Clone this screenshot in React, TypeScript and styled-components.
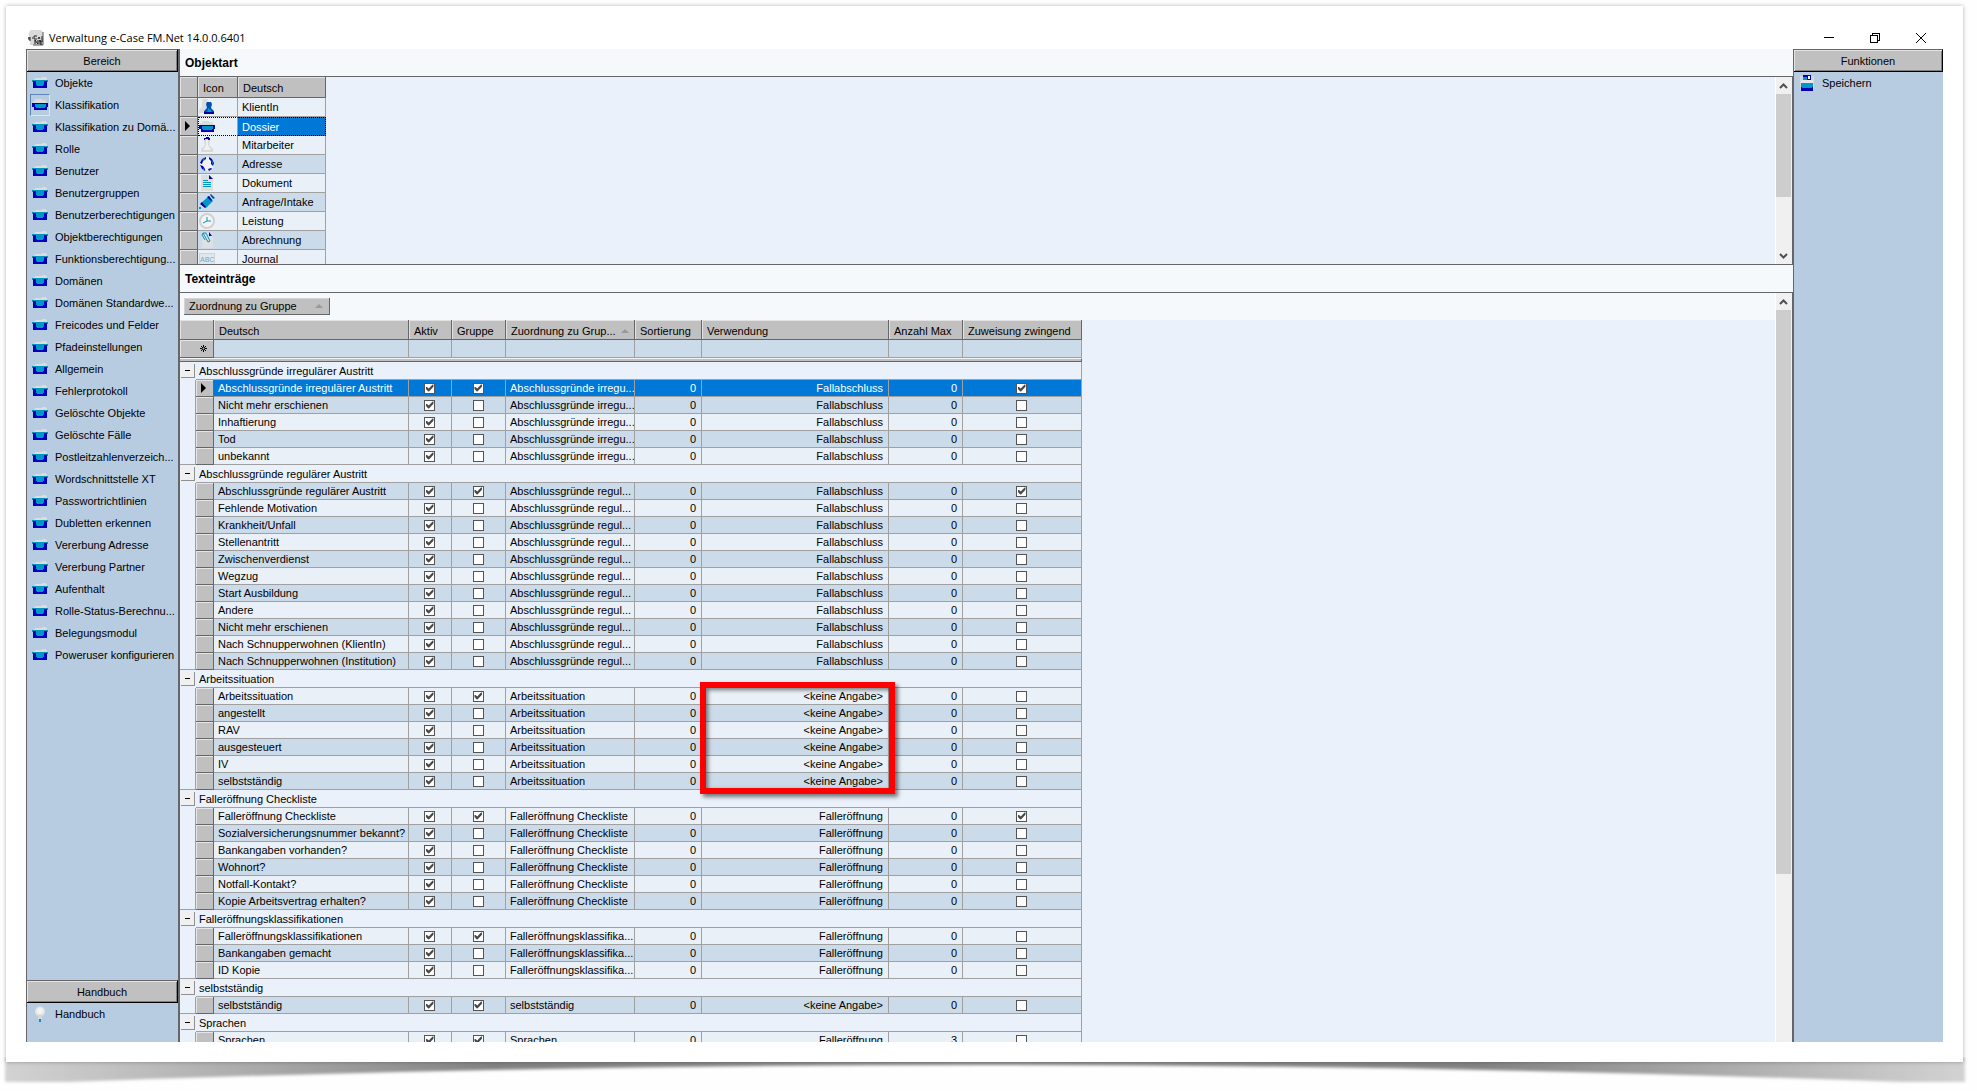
import React from 'react';
import styled, { createGlobalStyle, css } from 'styled-components';

const GlobalStyle = createGlobalStyle`
  *, *::before, *::after { box-sizing: border-box; }
  body { margin: 0; background: #fefefe; }
  button { font: inherit; color: inherit; margin: 0; padding: 0; border: 0; background: none; text-align: left; white-space: nowrap; }
  svg { display: block; flex: none; }
`;

const LINE = '#a0a0a0';
const DARK = '#646668';
const FACE = '#c0c0c0';
const PANEL = '#b8cce1';
const GRID = '#eaf1fa';
const STRIP = '#f5f9fc';
const ALT = '#ccdbea';
const SELECT = '#0078d7';

const Page = styled.div`
  position: relative;
  display: flex;
  height: 100vh;
  padding: 6px 14px 29px 6px;
  overflow: hidden;
  font: 11px/16px 'Liberation Sans', Arial, sans-serif;
  color: #000;
`;

const LiftShadow = styled.svg`
  position: absolute;
  left: 0;
  bottom: 0;
  width: 100%;
  height: 34px;
`;

const Card = styled.div`
  position: relative;
  flex: 1;
  min-width: 0;
  display: flex;
  flex-direction: column;
  padding: 20px;
  background: #fff;
  box-shadow: 0 0 4px rgba(0, 0, 0, 0.3);
`;

const TitleBar = styled.header`
  flex: none;
  display: flex;
  align-items: center;
  height: 23px;
  padding: 0 15px 0 2px;
  font: 11px/16px 'Open Sans', 'Noto Sans', sans-serif;
`;

const AppTitle = styled.h1`
  flex: 1;
  margin: 0 0 0 5px;
  font: inherit;
`;

const WindowButtons = styled.div`
  display: flex;
  gap: 32px;
`;

const WindowButton = styled.button`
  display: grid;
  place-items: center;
  width: 14px;
  height: 14px;
`;

const Body = styled.div`
  flex: 1;
  min-height: 0;
  display: flex;
  overflow: hidden;
`;

const Sidebar = styled.nav<{ $width: number }>`
  flex: none;
  display: flex;
  flex-direction: column;
  width: ${(p) => p.$width}px;
  background: ${PANEL};
  border-left: 1px solid ${DARK};
`;

const PanelHeader = styled.button`
  flex: none;
  height: 23px;
  text-align: center;
  background: ${FACE};
  border-top: 1px solid ${DARK};
  border-right: 1px solid #000;
  border-bottom: 1px solid #000;
  box-shadow: inset 1px 1px #e4e4e4, inset -1px -1px #808080;
`;

const ItemList = styled.ul<{ $grow?: boolean; $min?: number }>`
  flex: ${(p) => (p.$grow ? '1' : 'none')};
  min-height: ${(p) => p.$min ?? 0}px;
  margin: 0;
  padding: 0;
  list-style: none;
  overflow: hidden;
`;

const ItemButton = styled.button`
  display: flex;
  align-items: center;
  gap: 5px;
  width: 100%;
  height: 22px;
  padding-left: 3px;
`;

const IconSlot = styled.span<{ $pressed?: boolean }>`
  flex: none;
  display: grid;
  place-items: center;
  width: 20px;
  height: 22px;
  border: 1px solid transparent;
  ${(p) => p.$pressed && css`border-color: #5b87b8 #dbe6f2 #dbe6f2 #5b87b8;`}
`;

const Main = styled.main`
  flex: 1;
  min-width: 0;
  display: flex;
  flex-direction: column;
  border-left: 2px solid ${DARK};
`;

const SectionTitle = styled.h2`
  flex: none;
  height: 28px;
  margin: 0;
  padding: 0 5px;
  font: bold 12px/28px 'Liberation Sans', Arial, sans-serif;
  background: ${STRIP};
  border-bottom: 1px solid ${DARK};
`;

const Pane = styled.section<{ $fixed?: boolean }>`
  display: flex;
  flex: ${(p) => (p.$fixed ? 'none' : '1')};
  height: ${(p) => (p.$fixed ? '188px' : 'auto')};
  min-height: 0;
  overflow: hidden;
  background: ${GRID};
  border-right: 1px solid ${DARK};
  border-bottom: ${(p) => (p.$fixed ? `1px solid ${DARK}` : '0')};
`;

const PaneContent = styled.div`
  flex: 1;
  min-width: 0;
  overflow: hidden;
`;

const ScrollTrack = styled.div`
  flex: none;
  display: flex;
  flex-direction: column;
  width: 17px;
  background: #f0f0f0;
  border-left: 1px solid #fff;
`;

const ScrollArea = styled.div`
  flex: 1;
  min-height: 0;
`;

const ScrollThumb = styled.div<{ $size: number }>`
  height: ${(p) => p.$size}%;
  width: 15px;
  background: #cdcdcd;
`;

const ScrollButton = styled.button`
  display: grid;
  place-items: center;
  width: 15px;
  height: 17px;
`;

const Table = styled.table<{ $width: number }>`
  width: ${(p) => p.$width}px;
  table-layout: fixed;
  border-collapse: separate;
  border-spacing: 0;
  white-space: nowrap;
`;

const Th = styled.th`
  height: 20px;
  padding: 2px 5px 0;
  font-weight: normal;
  text-align: left;
  overflow: hidden;
  background: ${FACE};
  border-right: 1px solid ${DARK};
  border-bottom: 1px solid ${DARK};
  box-shadow: inset 1px 1px #e2e2e2;
`;

const ObjectTh = styled(Th)`
  height: 21px;
`;

const HeadLabel = styled.span`
  display: flex;
  align-items: center;
  justify-content: space-between;
`;

const Selector = styled.td`
  padding: 0 0 0 4px;
  background: ${FACE};
  border-right: 1px solid ${DARK};
  border-bottom: 1px solid ${DARK};
  box-shadow: inset 1px 1px #e6e6e6;
`;

type CellProps = { $alt?: boolean; $selected?: boolean; $align?: string };

const Td = styled.td<CellProps>`
  height: 17px;
  padding: 0 5px 0 4px;
  overflow: hidden;
  text-align: ${(p) => p.$align ?? 'left'};
  color: ${(p) => (p.$selected ? '#fff' : '#000')};
  background: ${(p) => (p.$selected ? SELECT : p.$alt ? ALT : '#e9f0f8')};
  border-right: 1px solid ${LINE};
  border-bottom: 1px solid ${LINE};
`;

const GroupNameTd = styled(Td)`
  padding: 0 0 0 4px;
`;

const ObjectTd = styled(Td)<{ $focusStart?: boolean; $focusEnd?: boolean }>`
  height: 19px;
  ${(p) => (p.$focusStart || p.$focusEnd) && css`
    border-top: 1px dotted #000;
    border-bottom: 1px dotted #000;
  `}
  ${(p) => p.$focusStart && css`border-left: 1px dotted #000;`}
  ${(p) => p.$focusEnd && css`border-right: 1px dotted #000;`}
`;

const ObjectIconTd = styled(ObjectTd)<{ $flush?: boolean }>`
  padding: 0 0 0 ${(p) => (p.$flush ? 0 : 1)}px;
`;

const NewRowTd = styled(Td)`
  height: 18px;
`;

const NewRowSelector = styled(Selector)`
  padding: 0 6px 0 0;
`;

const NewMark = styled.svg`
  margin-left: auto;
`;

const SplitTd = styled.td`
  height: 4px;
  padding: 0;
  line-height: 0;
  background: ${FACE};
  border-top: 1px solid #f4f4f4;
  border-bottom: 1px solid ${DARK};
  border-right: 1px solid ${DARK};
`;

const IndentTd = styled.td<{ $last?: boolean }>`
  padding: 0;
  border-right: 1px solid ${LINE};
  border-bottom: ${(p) => (p.$last ? `1px solid ${LINE}` : '0')};
`;

const ToggleTd = styled.td`
  height: 18px;
  padding: 0 0 0 1px;
`;

const Toggle = styled.button`
  display: grid;
  place-items: center;
  width: 14px;
  height: 14px;
  background: #f0f0f0;
  border-right: 1px solid #909090;
  border-bottom: 1px solid #909090;
`;

const GroupTd = styled.td`
  padding: 1px 3px 0;
  line-height: 16px;
  border-right: 1px solid ${LINE};
  border-bottom: 1px solid ${LINE};
`;

const Check = styled.input`
  appearance: none;
  display: block;
  width: 11px;
  height: 11px;
  margin: 0 auto;
  background: #fff;
  border: 1px solid #555;

  &:checked::after {
    content: '';
    display: block;
    width: 9px;
    height: 9px;
    background: #484848;
    clip-path: polygon(11% 38%, 22% 38%, 42% 56%, 84% 11%, 94% 11%, 94% 36%, 44% 89%, 36% 89%, 11% 62%);
  }
`;

const GroupByArea = styled.div`
  height: 27px;
  padding: 5px 4px;
  background: ${STRIP};
`;

const GroupByButton = styled.button`
  display: flex;
  align-items: center;
  justify-content: space-between;
  width: 146px;
  height: 17px;
  padding: 0 6px 0 5px;
  background: ${FACE};
  border-right: 1px solid ${DARK};
  border-bottom: 1px solid ${DARK};
  box-shadow: inset 1px 1px #d4d4d4;
`;

const GridBody = styled.div`
  position: relative;
`;

const Highlight = styled.div`
  position: absolute;
  left: 520px;
  top: 362px;
  width: 195px;
  height: 112px;
  border: 6px solid #fe0000;
  box-shadow: 3px 3px 4px rgba(0, 0, 0, 0.5), inset 2px 2px 4px rgba(0, 0, 0, 0.5);
`;

const FolderIcon = ({ open }: { open?: boolean }) => (
  <svg width="16" height="12" viewBox="0 0 16 12" shapeRendering="crispEdges" aria-hidden="true">
    {open ? (
      <>
        <path d="M3 0h7v1h4v2h1v2H1V2h2z" fill="#dcdcdc" />
        <path d="M0 4h16v4h-1v3H2V8H0z" fill="#0000b4" />
        <path d="M3 5h11v3h-1v1H4V8H3z" fill="#0096c8" />
      </>
    ) : (
      <>
        <path d="M3 1h7V0h4v1h1v2H2V2h1z" fill="#dcdcdc" />
        <path d="M0 3h16v2H0z" fill="#0096c8" />
        <path d="M1 4h14v7H1z" fill="#0000c0" />
        <path d="M4 3h8v5h-1v1H5V8H4z" fill="#0096c8" />
      </>
    )}
  </svg>
);

const SaveIcon = () => (
  <svg width="16" height="16" viewBox="0 0 16 16" shapeRendering="crispEdges" aria-hidden="true">
    <path d="M1 1h14v14H1z" fill="#d2d8de" />
    <path d="M4 0h8v5H4z" fill="#0000c0" />
    <path d="M4 2h4v3H4z" fill="#0096c8" />
    <path d="M9 1h2v3H9z" fill="#fff" />
    <path d="M2 5h12v3H2z" fill="#e6e6e6" />
    <path d="M2 8h12v8H2z" fill="#0096c8" />
    <path d="M2 12h1v1h10v-1h1v4H2z" fill="#0000b4" />
  </svg>
);

const BulbIcon = () => (
  <svg width="16" height="16" viewBox="0 0 16 16" aria-hidden="true">
    <circle cx="8" cy="5.500" r="5" fill="#e4e4e4" />
    <circle cx="8" cy="5" r="3" fill="#f4f4f4" />
    <path d="M6 9h4v4H6z" fill="#d8d8d8" />
    <path d="M7 13h2v3H7z" fill="#0096c8" />
  </svg>
);

const LogoIcon = () => (
  <svg width="16" height="16" viewBox="0 0 16 16" aria-hidden="true">
    <path d="M1 6a7 6 0 0 1 14-3v12H2z" fill="#d9d9d9" />
    <path d="M15 2v13H5" stroke="#555" fill="none" />
    <path d="M0 8h3M1 7v3h2M4 8h1M6 6v3h3M6 6h3M10 9l1-2 1 2M13 7h2M13 9h2" stroke="#222" fill="none" />
    <path d="M7 14v-4l3 4v-4M12 10v4h2M11 11h4M12 12h2" stroke="#111" fill="none" />
  </svg>
);

const objectIcons: Record<string, React.ReactNode> = {
  KlientIn: (
    <>
      <path d="M4 0h4l1 3-1 4 3 3v4H0v-3l3-3V3z" fill="#dcdcdc" />
      <path d="M8 3h4l1 2-1 4 3 3v3H5v-3l3-3-1-4z" fill="#0050b4" />
      <path d="M9 9l3 2 1 4H8z" fill="#0096c8" />
      <path d="M5 13h10v2H5z" fill="#0000a0" />
    </>
  ),
  Mitarbeiter: (
    <>
      <path d="M6 1h4l1 3-1 4 4 4v3H2v-3l4-4-1-4z" fill="#d8d8d8" />
      <path d="M7 3h2v5l3 5H4l3-5z" fill="#f0f0f0" />
      <path d="M5 3V1h2V0h3v1h1v2H9V2H6v1z" fill="#0000a0" />
    </>
  ),
  Adresse: (
    <>
      <circle cx="8" cy="8" r="7" fill="#f2f2f2" />
      <path d="M3 3l4-2v2L4 5 3 8 1 7zM10 1l3 2 2 4-1 3-2-2V5l-2-2zM1 9l3 1 2 3v2l-3-2zM9 13l3-1 1 1-3 2z" fill="#0000b4" />
      <path d="M3 4l3-2-1 3zM12 4l2 2v3zM4 12l3 3-3-1zM10 14l3-2v1z" fill="#0096c8" />
    </>
  ),
  Dokument: (
    <>
      <path d="M2 0h9l3 4v12H2z" fill="#dedede" />
      <path d="M10 0l4 4h-4z" fill="#0000b4" />
      <path d="M4 5.500h5M4 7.500h8M4 9.500h8M4 11.500h8" stroke="#0096c8" />
    </>
  ),
  'Anfrage/Intake': (
    <>
      <path d="M10 2l4 5-7 7-5-5z" fill="#0096c8" />
      <path d="M10 2l3 4-1 1-4-4zM3 8l4 5-1 1-5-4z" fill="#0000a0" />
      <path d="M12 0l4 4-2 1-3-4z" fill="#0050b4" />
      <path d="M0 13h2v2H0z" fill="#0096c8" />
    </>
  ),
  Leistung: (
    <>
      <circle cx="8" cy="8" r="7" fill="#f4f4f4" stroke="#d0d0d0" strokeWidth="2" />
      <path d="M8 4v4h4M8 8l-4 2" stroke="#0096c8" strokeWidth="1" fill="none" />
    </>
  ),
  Abrechnung: (
    <>
      <path d="M3 1h9l2 3v12H3z" fill="#e0e0e0" />
      <path d="M10 0l3 4h-3z" fill="#0000b4" />
      <path d="M4 1l5 9 2-1-4-8-3 0-1 2 3 5" stroke="#0096c8" fill="none" />
    </>
  ),
};

const AbcBadge = styled.span`
  display: block;
  width: 16px;
  height: 12px;
  overflow: hidden;
  font: 7px/11px 'Liberation Sans', Arial, sans-serif;
  text-align: center;
  color: #5cb0d4;
  background: #e2e6ea;
  border: 1px solid #d0d4d8;
`;

const ObjectIcon = ({ name }: { name: string }) => {
  if (name === 'Dossier') return <FolderIcon open />;
  if (name === 'Journal') return <AbcBadge>ABC</AbcBadge>;
  return <svg width="16" height="16" viewBox="0 0 16 16" aria-hidden="true">{objectIcons[name]}</svg>;
};

const RowArrow = () => (
  <svg width="12" height="10" viewBox="0 0 12 10" aria-hidden="true">
    <path d="M1 0l5 5-5 5z" fill="#000" />
  </svg>
);

const SortMark = () => (
  <svg width="8" height="4" viewBox="0 0 8 4" aria-hidden="true">
    <path d="M4 0l4 4H0z" fill="#9a9a9a" />
  </svg>
);

const Chevron = ({ down }: { down?: boolean }) => (
  <svg width="9" height="6" viewBox="0 0 9 6" aria-hidden="true">
    <path d={down ? 'M1 1l3.500 3.500L8 1' : 'M1 5l3.500-3.500L8 5'} fill="none" stroke="#505050" strokeWidth="2" />
  </svg>
);

const Scrollbar = ({ size, both }: { size: number; both?: boolean }) => (
  <ScrollTrack>
    <ScrollButton aria-label="Nach oben"><Chevron /></ScrollButton>
    <ScrollArea><ScrollThumb $size={size} /></ScrollArea>
    {both && <ScrollButton aria-label="Nach unten"><Chevron down /></ScrollButton>}
  </ScrollTrack>
);

const areas = [
  'Objekte', 'Klassifikation', 'Klassifikation zu Domä...', 'Rolle', 'Benutzer', 'Benutzergruppen',
  'Benutzerberechtigungen', 'Objektberechtigungen', 'Funktionsberechtigung...', 'Domänen',
  'Domänen Standardwe...', 'Freicodes und Felder', 'Pfadeinstellungen', 'Allgemein', 'Fehlerprotokoll',
  'Gelöschte Objekte', 'Gelöschte Fälle', 'Postleitzahlenverzeich...', 'Wordschnittstelle XT',
  'Passwortrichtlinien', 'Dubletten erkennen', 'Vererbung Adresse', 'Vererbung Partner', 'Aufenthalt',
  'Rolle-Status-Berechnu...', 'Belegungsmodul', 'Poweruser konfigurieren',
];

const objectTypes = [
  'KlientIn', 'Dossier', 'Mitarbeiter', 'Adresse', 'Dokument', 'Anfrage/Intake', 'Leistung', 'Abrechnung', 'Journal',
];

type Group = { name: string; short: string; usage: string; required?: boolean; max?: number; rows: string[] };

const groups: Group[] = [
  {
    name: 'Abschlussgründe irregulärer Austritt', short: 'Abschlussgründe irregu...', usage: 'Fallabschluss', required: true,
    rows: ['Nicht mehr erschienen', 'Inhaftierung', 'Tod', 'unbekannt'],
  },
  {
    name: 'Abschlussgründe regulärer Austritt', short: 'Abschlussgründe regul...', usage: 'Fallabschluss', required: true,
    rows: ['Fehlende Motivation', 'Krankheit/Unfall', 'Stellenantritt', 'Zwischenverdienst', 'Wegzug', 'Start Ausbildung',
      'Andere', 'Nicht mehr erschienen', 'Nach Schnupperwohnen (KlientIn)', 'Nach Schnupperwohnen (Institution)'],
  },
  {
    name: 'Arbeitssituation', short: 'Arbeitssituation', usage: '<keine Angabe>',
    rows: ['angestellt', 'RAV', 'ausgesteuert', 'IV', 'selbstständig'],
  },
  {
    name: 'Falleröffnung Checkliste', short: 'Falleröffnung Checkliste', usage: 'Falleröffnung', required: true,
    rows: ['Sozialversicherungsnummer bekannt?', 'Bankangaben vorhanden?', 'Wohnort?', 'Notfall-Kontakt?',
      'Kopie Arbeitsvertrag erhalten?'],
  },
  {
    name: 'Falleröffnungsklassifikationen', short: 'Falleröffnungsklassifika...', usage: 'Falleröffnung',
    rows: ['Bankangaben gemacht', 'ID Kopie'],
  },
  { name: 'selbstständig', short: 'selbstständig', usage: '<keine Angabe>', rows: [] },
  { name: 'Sprachen', short: 'Sprachen', usage: 'Falleröffnung', max: 3, rows: [] },
];

const entryColumns = [16, 18, 195, 43, 54, 129, 67, 187, 74, 119];

const starts = groups.map((_, i) => groups.slice(0, i).reduce((n, g) => n + g.rows.length + 1, 0));

const GroupRows = ({ group, start }: { group: Group; start: number }) => {
  const rows = [group.name, ...group.rows];
  return (
    <tbody>
      <tr>
        <ToggleTd>
          <Toggle aria-label={`${group.name} zuklappen`}>
            <svg width="5" height="1" aria-hidden="true"><path d="M0 0h5v1H0z" /></svg>
          </Toggle>
        </ToggleTd>
        <GroupTd colSpan={9}>{group.name}</GroupTd>
      </tr>
      {rows.map((label, i) => {
        const look = { $alt: (start + i) % 2 === 1, $selected: start + i === 0 };
        return (
          <tr key={label}>
            <IndentTd $last={i === rows.length - 1} />
            <Selector>{look.$selected && <RowArrow />}</Selector>
            <Td {...look}>{label}</Td>
            <Td {...look}><Check type="checkbox" aria-label={`${label}: Aktiv`} defaultChecked /></Td>
            <Td {...look}><Check type="checkbox" aria-label={`${label}: Gruppe`} defaultChecked={i === 0} /></Td>
            <GroupNameTd {...look}>{group.short}</GroupNameTd>
            <Td {...look} $align="right">0</Td>
            <Td {...look} $align="right">{group.usage}</Td>
            <Td {...look} $align="right">{group.max ?? 0}</Td>
            <Td {...look}>
              <Check type="checkbox" aria-label={`${label}: Zuweisung zwingend`} defaultChecked={i === 0 && !!group.required} />
            </Td>
          </tr>
        );
      })}
    </tbody>
  );
};

export default function App() {
  return (
    <Page>
      <GlobalStyle />
      <LiftShadow viewBox="0 0 1977 34" preserveAspectRatio="none" aria-hidden="true">
        <defs>
          <linearGradient id="lift" x1="0" x2="1" y1="0" y2="0">
            <stop offset="0" stopColor="#d2d2d2" />
            <stop offset="0.060" stopColor="#c0c0c0" />
            <stop offset="0.250" stopColor="#828282" />
            <stop offset="0.500" stopColor="#8c8c8c" />
            <stop offset="0.750" stopColor="#828282" />
            <stop offset="0.940" stopColor="#c0c0c0" />
            <stop offset="1" stopColor="#d2d2d2" />
          </linearGradient>
          <filter id="soft" x="-1%" y="-30%" width="102%" height="160%">
            <feGaussianBlur stdDeviation="1.500" />
          </filter>
        </defs>
        <path d="M5 0V25H68Q520 8 985 8Q1450 8 1902 25H1965V0z" fill="url(#lift)" filter="url(#soft)" />
      </LiftShadow>
      <Card>
        <TitleBar>
          <LogoIcon />
          <AppTitle>Verwaltung e-Case FM.Net 14.0.0.6401</AppTitle>
          <WindowButtons>
            <WindowButton aria-label="Minimieren">
              <svg width="10" height="1" aria-hidden="true"><path d="M0 0h10v1H0z" /></svg>
            </WindowButton>
            <WindowButton aria-label="Wiederherstellen">
              <svg width="10" height="10" viewBox="0 0 10 10" fill="none" stroke="#000" shapeRendering="crispEdges" aria-hidden="true">
                <path d="M.500 2.500h7v7h-7zM2.500 2V.500h7v7H8" />
              </svg>
            </WindowButton>
            <WindowButton aria-label="Schliessen">
              <svg width="10" height="10" viewBox="0 0 10 10" fill="none" stroke="#000" aria-hidden="true">
                <path d="M0 0l10 10M10 0L0 10" />
              </svg>
            </WindowButton>
          </WindowButtons>
        </TitleBar>
        <Body>
          <Sidebar $width={152} aria-label="Bereich">
            <PanelHeader>Bereich</PanelHeader>
            <ItemList $grow>
              {areas.map((area) => {
                const active = area === 'Klassifikation';
                return (
                  <li key={area}>
                    <ItemButton aria-current={active}>
                      <IconSlot $pressed={active}><FolderIcon open={active} /></IconSlot>
                      {area}
                    </ItemButton>
                  </li>
                );
              })}
            </ItemList>
            <PanelHeader>Handbuch</PanelHeader>
            <ItemList $min={39}>
              <li><ItemButton><IconSlot><BulbIcon /></IconSlot>Handbuch</ItemButton></li>
            </ItemList>
          </Sidebar>
          <Main>
            <SectionTitle>Objektart</SectionTitle>
            <Pane $fixed>
              <PaneContent>
                <Table $width={146}>
                  <colgroup><col width="18" /><col width="40" /><col width="88" /></colgroup>
                  <thead>
                    <tr><ObjectTh /><ObjectTh>Icon</ObjectTh><ObjectTh>Deutsch</ObjectTh></tr>
                  </thead>
                  <tbody>
                    {objectTypes.map((type, i) => {
                      const active = type === 'Dossier';
                      return (
                        <tr key={type}>
                          <Selector>{active && <RowArrow />}</Selector>
                          <ObjectIconTd $alt={i % 2 === 1 && !active} $focusStart={active} $flush={active}>
                            <ObjectIcon name={type} />
                          </ObjectIconTd>
                          <ObjectTd $alt={i % 2 === 1} $selected={active} $focusEnd={active}>{type}</ObjectTd>
                        </tr>
                      );
                    })}
                  </tbody>
                </Table>
              </PaneContent>
              <Scrollbar size={67} both />
            </Pane>
            <SectionTitle>Texteinträge</SectionTitle>
            <Pane>
              <PaneContent>
                <GroupByArea>
                  <GroupByButton>Zuordnung zu Gruppe<SortMark /></GroupByButton>
                </GroupByArea>
                <GridBody>
                  <Table $width={902}>
                    <colgroup>{entryColumns.map((w, i) => <col key={i} width={w} />)}</colgroup>
                    <thead>
                      <tr>
                        <Th colSpan={2} />
                        <Th>Deutsch</Th>
                        <Th>Aktiv</Th>
                        <Th>Gruppe</Th>
                        <Th><HeadLabel>Zuordnung zu Grup...<SortMark /></HeadLabel></Th>
                        <Th>Sortierung</Th>
                        <Th>Verwendung</Th>
                        <Th>Anzahl Max</Th>
                        <Th>Zuweisung zwingend</Th>
                      </tr>
                    </thead>
                    <tbody>
                      <tr>
                        <NewRowSelector colSpan={2}>
                          <NewMark width="7" height="7" viewBox="0 0 7 7" stroke="#000" fill="none" aria-hidden="true">
                            <path d="M3.500 0v7M0 3.500h7M1 1l5 5M6 1L1 6" />
                            <circle cx="3.500" cy="3.500" r="1" fill="#c0c0c0" stroke="none" />
                          </NewMark>
                        </NewRowSelector>
                        {entryColumns.slice(2).map((_, i) => <NewRowTd key={i} $alt />)}
                      </tr>
                      <tr><SplitTd colSpan={10} /></tr>
                    </tbody>
                    {groups.map((group, i) => <GroupRows key={group.name} group={group} start={starts[i]} />)}
                  </Table>
                  <Highlight />
                </GridBody>
              </PaneContent>
              <Scrollbar size={77} />
            </Pane>
          </Main>
          <Sidebar $width={150} aria-label="Funktionen">
            <PanelHeader>Funktionen</PanelHeader>
            <ItemList $grow>
              <li><ItemButton><IconSlot><SaveIcon /></IconSlot>Speichern</ItemButton></li>
            </ItemList>
          </Sidebar>
        </Body>
      </Card>
    </Page>
  );
}
